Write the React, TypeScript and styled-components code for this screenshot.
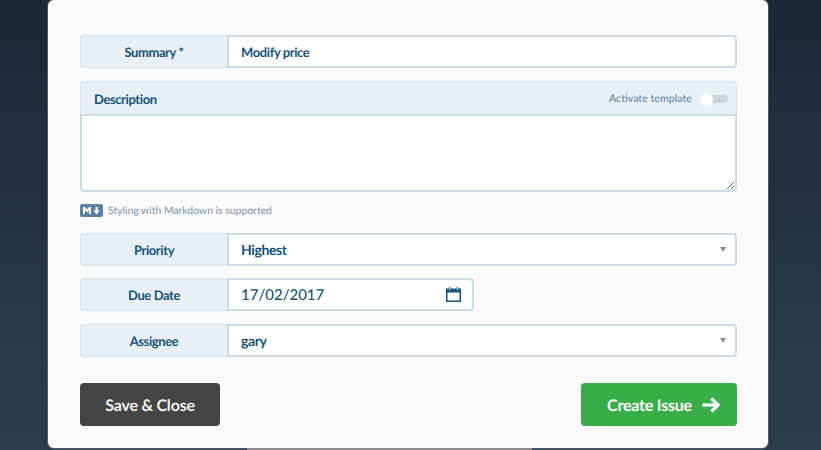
import React from 'react';
import styled, { createGlobalStyle } from 'styled-components';

const GlobalStyle = createGlobalStyle`
  html, body {
    margin: 0;
    height: 100%;
    overflow: hidden;
  }
  body {
    font-family: Lato, "Open Sans", sans-serif;
    text-rendering: geometricPrecision;
  }
`;

const CalendarIcon = () => (
    <svg width="15" height="15" viewBox="0 0 15 15">
        <path d="M0 1.500h15V15H0z M1.500 5.500v8h12v-8z" fill="#12527c" fillRule="evenodd" />
        <rect x="2.750" y="0.500" width="2" height="3" rx="1" fill="#e8f0f6" stroke="#12527c" strokeWidth="0.8" />
        <rect x="10.250" y="0.500" width="2" height="3" rx="1" fill="#e8f0f6" stroke="#12527c" strokeWidth="0.8" />
    </svg>
);

const MarkdownIcon = () => (
    <svg width="23" height="13" viewBox="0 0 23 13">
        <rect width="23" height="13" rx="2" fill="#5c7fa6" />
        <path d="M3 10V3h2l2 2.6L9 3h2v7H9V6L7 8.600 5 6v4z M15.500 3h2.200v3.500h2L16.600 10.400 13.500 6.500h2z" fill="#fff" />
    </svg>
);

const ArrowIcon = () => (
    <svg width="18" height="16" viewBox="0 0 18 16" fill="none" stroke="#fff" strokeWidth="3.2">
        <path d="M0.500 8h15" />
        <path d="M9.500 1.500L16 8l-6.500 6.500" />
    </svg>
);

const SelectField: React.FC<{ label: string; value: string }> = ({ label, value }) => (
    <Row>
        <Label>{label}</Label>
        <Input>
            {value}
            <Caret />
        </Input>
    </Row>
);

const App: React.FC = () => {
    return (
        <Page>
            <GlobalStyle />
            <Modal>
                <Row>
                    <Label>Summary *</Label>
                    <SummaryInput>Modify price</SummaryInput>
                </Row>
                <DescriptionPanel>
                    <DescriptionHead>
                        <DescriptionTitle>Description</DescriptionTitle>
                        <TemplateToggle>
                            Activate template
                            <Track>
                                <Knob />
                            </Track>
                        </TemplateToggle>
                    </DescriptionHead>
                    <TextArea />
                </DescriptionPanel>
                <Hint>
                    <MarkdownIcon />
                    Styling with Markdown is supported
                </Hint>
                <SelectField label="Priority" value="Highest" />
                <DateRow>
                    <Label>Due Date</Label>
                    <DateInput>
                        17/02/2017
                        <CalendarIcon />
                    </DateInput>
                </DateRow>
                <SelectField label="Assignee" value="gary" />
                <Actions>
                    <SaveButton>Save &amp; Close</SaveButton>
                    <CreateButton>
                        Create Issue
                        <ArrowIcon />
                    </CreateButton>
                </Actions>
            </Modal>
            <PageBehind />
        </Page>
    );
};

const Page = styled.div`
  width: 821px;
  height: 450px;
  overflow: hidden;
  padding-left: 48px;
  box-sizing: border-box;
  background: linear-gradient(180deg, #1b2838 0%, #2d3d50 100%);
`;

const Modal = styled.div`
  width: 720px;
  height: 448px;
  box-sizing: border-box;
  padding: 35px 31px 0 32px;
  background-color: #fafafa;
  border-radius: 6px;
  box-shadow: 0 0 0 1px rgba(120, 120, 120, 0.55);
  color: #12527c;
`;

const PageBehind = styled.div`
  width: 285px;
  height: 2px;
  margin-left: 199px;
  background-color: #8a8a8a;
`;

const Row = styled.div`
  display: flex;
  height: 33px;
  margin-bottom: 12px;
`;

const DateRow = styled(Row)`
  width: 394px;
  margin-bottom: 13px;
`;

const Label = styled.div`
  flex: 0 0 147px;
  box-sizing: border-box;
  display: flex;
  align-items: center;
  justify-content: center;
  padding-top: 1px;
  font-size: 13px;
  font-weight: 700;
  letter-spacing: -0.4px;
  background-color: #e8f0f6;
  border: 1px solid #d3e2ed;
  border-right: none;
  border-radius: 4px 0 0 4px;
`;

const Input = styled.div`
  flex: 1;
  position: relative;
  box-sizing: border-box;
  display: flex;
  align-items: center;
  padding-left: 12px;
  font-size: 14px;
  font-weight: 700;
  letter-spacing: -0.4px;
  background-color: #fff;
  border: 2px solid #c8dcea;
  border-radius: 0 4px 4px 0;
`;

const SummaryInput = styled(Input)`
  padding-top: 1px;
  font-size: 13px;
`;

const DateInput = styled(Input)`
  justify-content: space-between;
  padding-right: 11px;
  font-size: 15px;
  font-weight: 500;
  letter-spacing: 0;
`;

const Caret = styled.span`
  position: absolute;
  right: 9px;
  top: 12px;
  border-left: 3px solid transparent;
  border-right: 3px solid transparent;
  border-top: 5px solid #8b8b8b;
`;

const DescriptionPanel = styled.div`
  height: 111px;
  box-sizing: border-box;
  display: flex;
  flex-direction: column;
  margin-top: 13px;
`;

const DescriptionHead = styled.div`
  height: 33px;
  flex: none;
  box-sizing: border-box;
  display: flex;
  align-items: center;
  justify-content: space-between;
  padding: 1px 8px 0 13px;
  background-color: #e8f0f6;
  border: 1px solid #d3e2ed;
  border-bottom: none;
  border-radius: 4px 4px 0 0;
`;

const DescriptionTitle = styled.span`
  font-size: 13px;
  font-weight: 700;
  letter-spacing: -0.4px;
`;

const TemplateToggle = styled.div`
  display: flex;
  align-items: center;
  gap: 8px;
  font-size: 10.7px;
  color: #5c7fa6;
`;

const Track = styled.div`
  position: relative;
  width: 28px;
  height: 8px;
  background-color: #cfd6d9;
  border-radius: 4px;
`;

const Knob = styled.div`
  position: absolute;
  left: 0;
  top: -2px;
  width: 13px;
  height: 13px;
  background-color: #fff;
  border-radius: 50%;
`;

const TextArea = styled.textarea`
  flex: 1;
  display: block;
  width: 100%;
  box-sizing: border-box;
  margin: 0;
  padding: 8px 12px;
  background-color: #fff;
  border: 2px solid #c8dcea;
  border-radius: 0 0 4px 4px;
  outline: none;
`;

const Hint = styled.div`
  display: flex;
  align-items: center;
  gap: 5px;
  height: 13px;
  margin: 12px 0 16px;
  font-size: 10.4px;
  color: #7e93ad;
`;

const Actions = styled.div`
  display: flex;
  justify-content: space-between;
  margin-top: 26px;
`;

const SaveButton = styled.button`
  width: 140px;
  height: 43px;
  padding: 1px 0 0;
  font-family: inherit;
  font-size: 16px;
  font-weight: 700;
  letter-spacing: -0.2px;
  text-rendering: geometricPrecision;
  color: #f2f2f2;
  background-color: #444;
  border: none;
  border-radius: 4px;
`;

const CreateButton = styled(SaveButton)`
  width: 156px;
  display: flex;
  align-items: center;
  justify-content: center;
  gap: 10px;
  padding-left: 9px;
  color: #fff;
  background-color: #38ad48;
`;

export default App;
